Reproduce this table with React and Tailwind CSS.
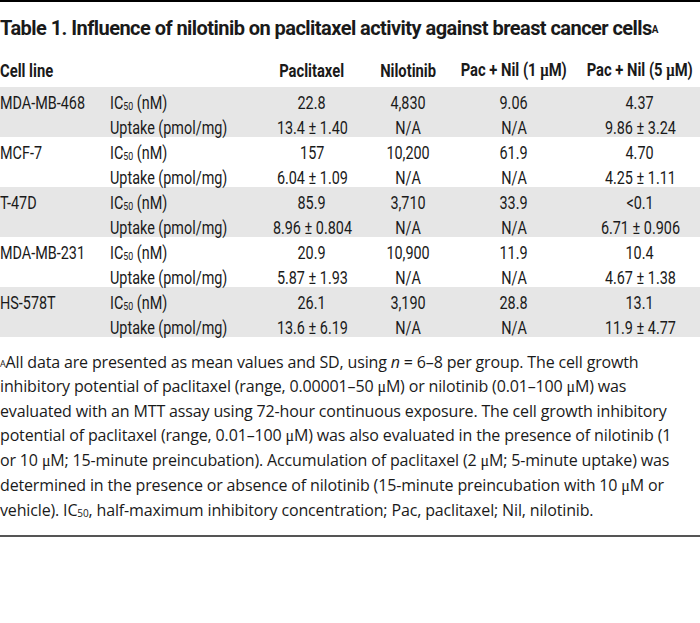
import React from 'react';

const Mu = () => <span className="font-['Liberation_Serif',serif]">μ</span>;

// Roboto, squeezed a little to stand in for the condensed face of the original
const Cell = ({ children, center, head }) => (
  <div className={`flex ${center ? 'justify-center' : 'justify-start'}`}>
    <span
      className={`inline-block whitespace-nowrap ${head ? 'scale-x-82' : 'scale-x-80'} ${
        center ? 'origin-center' : 'origin-left'
      }`}
    >
      {children}
    </span>
  </div>
);

const Ic50 = () => (
  <>
    IC<sub className="text-[11px] relative top-[1px]">50</sub> (nM)
  </>
);

const groups = [
  {
    name: 'MDA-MB-468',
    ic: ['22.8', '4,830', '9.06', '4.37'],
    up: ['13.4 ± 1.40', 'N/A', 'N/A', '9.86 ± 3.24'],
    shade: true,
  },
  {
    name: 'MCF-7',
    ic: ['157', '10,200', '61.9', '4.70'],
    up: ['6.04 ± 1.09', 'N/A', 'N/A', '4.25 ± 1.11'],
  },
  {
    name: 'T-47D',
    ic: ['85.9', '3,710', '33.9', '<0.1'],
    up: ['8.96 ± 0.804', 'N/A', 'N/A', '6.71 ± 0.906'],
    shade: true,
  },
  {
    name: 'MDA-MB-231',
    ic: ['20.9', '10,900', '11.9', '10.4'],
    up: ['5.87 ± 1.93', 'N/A', 'N/A', '4.67 ± 1.38'],
  },
  {
    name: 'HS-578T',
    ic: ['26.1', '3,190', '28.8', '13.1'],
    up: ['13.6 ± 6.19', 'N/A', 'N/A', '11.9 ± 4.77'],
    shade: true,
  },
];

const cols = 'grid grid-cols-[110px_146px_112px_80px_132px_120px]';

const Row = ({ first, label, values }) => (
  <div className={`${cols} h-[25px] items-center pt-[2px]`}>
    <Cell>{first}</Cell>
    <Cell>{label}</Cell>
    {values.map((v, i) => (
      <Cell key={i} center>{v}</Cell>
    ))}
  </div>
);

export default function App() {
  return (
    <div className="w-[700px] bg-white text-[#1a1a1a]">
      <div className="border-t-2 border-black" />

      <h1 className="pt-[13px] font-['Roboto',sans-serif] text-[20px] font-bold leading-[26px] tracking-[-0.55px] whitespace-nowrap">
        Table 1. Influence of nilotinib on paclitaxel activity against breast cancer cells
        <sup className="text-[10px] relative -top-[2px]">A</sup>
      </h1>

      <div className="font-['Roboto',sans-serif] text-[18px]">
        <div className={`${cols} h-[46px] items-end pb-[3px] font-bold`}>
          <Cell head>Cell line</Cell>
          <div />
          <Cell head center>Paclitaxel</Cell>
          <Cell head center>Nilotinib</Cell>
          <Cell head center>Pac + Nil (1 <Mu />M)</Cell>
          <Cell head center>Pac + Nil (5 <Mu />M)</Cell>
        </div>

        {groups.map((g) => (
          <div key={g.name} className={g.shade ? 'bg-[#e6e6e6]' : 'bg-white'}>
            <Row first={g.name} label={<Ic50 />} values={g.ic} />
            <Row first="" label="Uptake (pmol/mg)" values={g.up} />
          </div>
        ))}
      </div>

      <p className="pt-[13px] pb-[13px] text-[16px] leading-[24px] font-['Open_Sans',sans-serif] tracking-[-0.15px] whitespace-nowrap">
        <sup className="text-[9px] relative -top-[1px]">A</sup>All data are presented as mean values and SD, using <i>n</i> = 6–8 per group. The cell growth
        <br />
        inhibitory potential of paclitaxel (range, 0.00001–50 <Mu />M) or nilotinib (0.01–100 <Mu />M) was
        <br />
        evaluated with an MTT assay using 72-hour continuous exposure. The cell growth inhibitory
        <br />
        potential of paclitaxel (range, 0.01–100 <Mu />M) was also evaluated in the presence of nilotinib (1
        <br />
        or 10 <Mu />M; 15-minute preincubation). Accumulation of paclitaxel (2 <Mu />M; 5-minute uptake) was
        <br />
        determined in the presence or absence of nilotinib (15-minute preincubation with 10 <Mu />M or
        <br />
        vehicle). IC<sub className="text-[10px] relative top-[1px]">50</sub>, half-maximum inhibitory concentration; Pac, paclitaxel; Nil, nilotinib.
      </p>

      <div className="border-t-2 border-[#555]" />
    </div>
  );
}
